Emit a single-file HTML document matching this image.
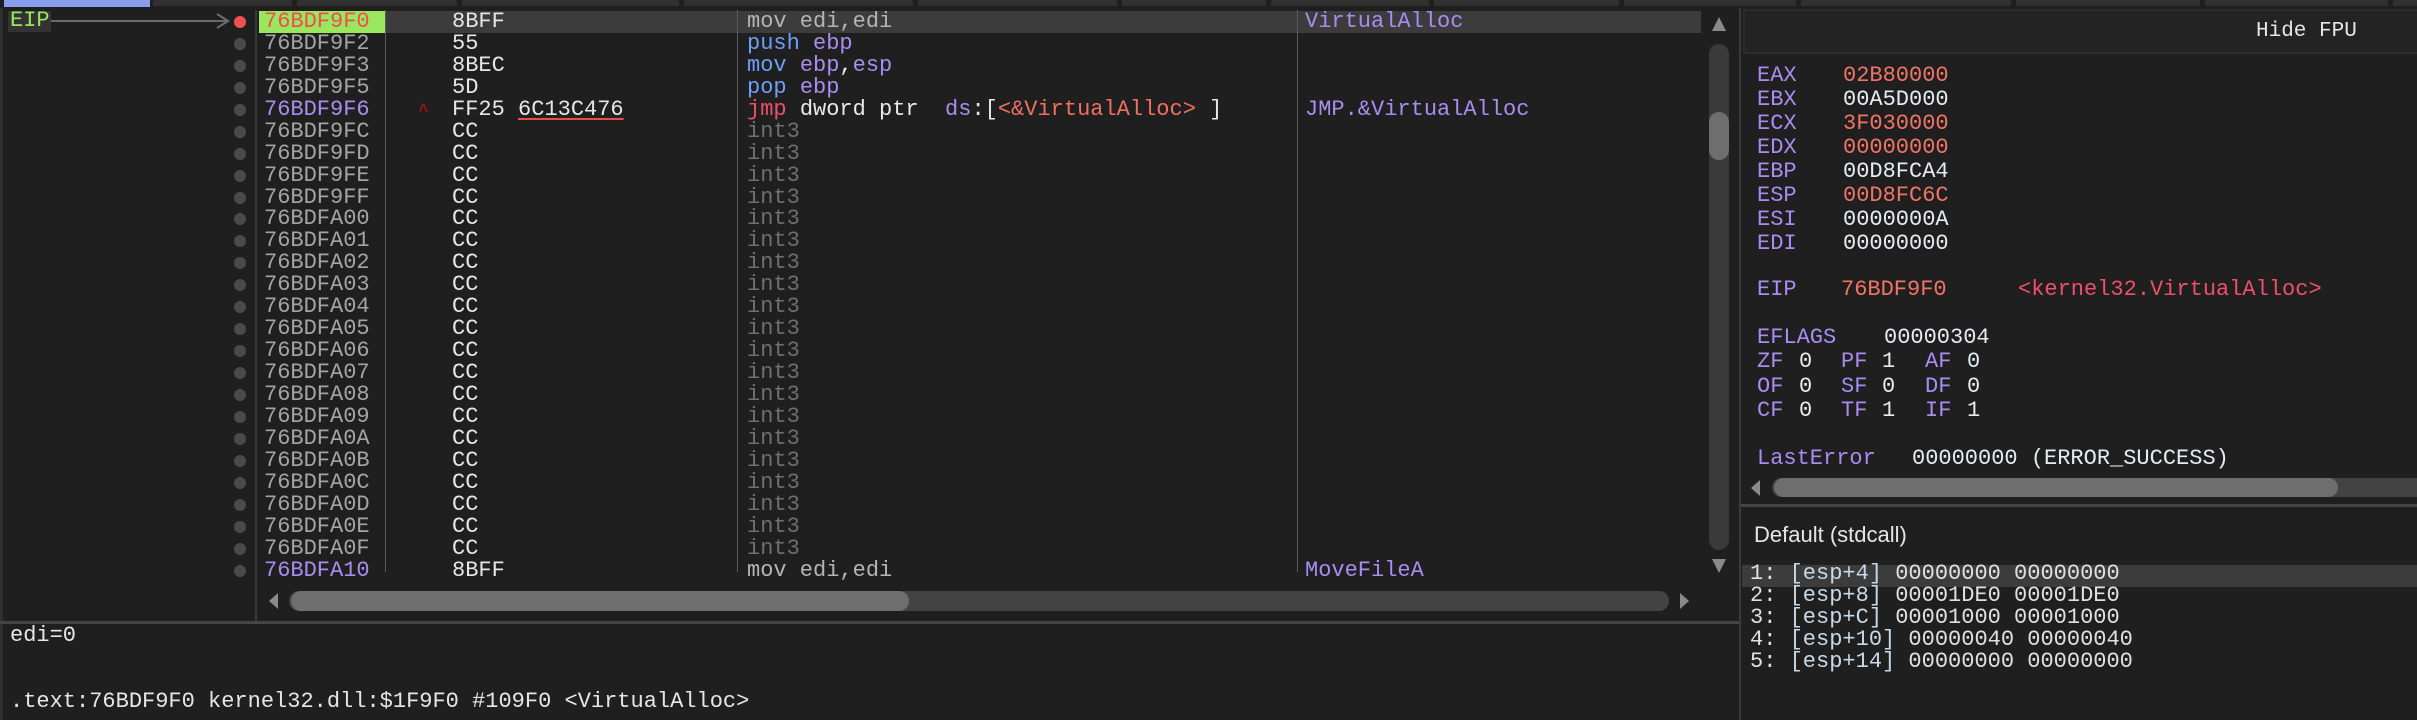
<!DOCTYPE html>
<html><head><meta charset="utf-8">
<style>
*{margin:0;padding:0;box-sizing:border-box}
body{width:2417px;height:720px;background:#1f1f1f;overflow:hidden;position:relative;font-family:"Liberation Mono","DejaVu Sans Mono",monospace;font-size:22px;color:#e0e0e0}
.a{position:absolute;white-space:pre;line-height:22px}
.tab{position:absolute;top:0;height:6px;background:#303030}
.row{position:absolute;left:0;width:1705px;height:22px}
.dot{position:absolute;left:234px;top:5px;width:12px;height:12px;border-radius:6px;background:#4a4a4a}
.ad{position:absolute;left:264px;top:0;color:#a4a4a4}
.by{position:absolute;left:452px;top:0;color:#e6e6e6}
.ds{position:absolute;left:747px;top:0}
.cm{position:absolute;left:1305px;top:0;color:#a98cf0}
.vl{position:absolute;width:2px;background:#555}
.r{color:#a98cf0}.v{color:#e4ecf2}.c{color:#f07466}
.g{color:#6f6f6f}.b{color:#6f9ef8}.p{color:#a98cf0}.rd{color:#f04e6a}.w{color:#e8e8e8}.s{color:#f07060}
.sb{color:#c8d8e8}
</style></head><body>
<div class="tab" style="left:4px;width:146px;background:#8a9ef0;height:7px"></div>
<div class="tab" style="left:153px;width:139px"></div>
<div class="tab" style="left:297px;width:160px"></div>
<div class="tab" style="left:462px;width:217px"></div>
<div class="tab" style="left:684px;width:229px"></div>
<div class="tab" style="left:918px;width:199px"></div>
<div class="tab" style="left:1122px;width:144px"></div>
<div class="tab" style="left:1271px;width:158px"></div>
<div class="tab" style="left:1434px;width:185px"></div>
<div class="tab" style="left:1624px;width:172px"></div>
<div class="tab" style="left:1801px;width:210px"></div>
<div class="tab" style="left:2016px;width:184px"></div>
<div class="tab" style="left:2205px;width:183px"></div>
<div class="tab" style="left:2393px;width:24px"></div>

<div style="position:absolute;left:0;top:8px;width:3px;height:712px;background:#303030"></div>
<div class="vl" style="left:255px;top:10px;height:611px;background:#3a3a3a"></div>
<div style="position:absolute;left:8px;top:11px;width:43px;height:21px;background:#333"></div>
<div class="a" style="left:10px;top:10px;color:#9ae65e">EIP</div>
<div style="position:absolute;left:51px;top:20px;width:178px;height:2px;background:#6a6a6a"></div>
<svg style="position:absolute;left:214px;top:12px" width="18" height="18"><path d="M3 2 L14 9 L3 16" stroke="#6a6a6a" stroke-width="2.2" fill="none"/></svg>

<div style="position:absolute;left:386px;top:11px;width:1315px;height:22px;background:#3c3c3c"></div>
<div style="position:absolute;left:259px;top:11px;width:126px;height:22px;background:#9ae65e"></div>
<div class="vl" style="left:385px;top:10px;height:562px;background:#5a5a5a;width:1px"></div>
<div class="vl" style="left:737px;top:10px;height:562px;background:#5a5a5a;width:1px"></div>
<div class="vl" style="left:1297px;top:10px;height:562px;background:#5a5a5a;width:1px"></div>

<div id="rows"></div>
<script>
var rows=[
["76BDF9F0","8BFF",'<span style="color:#b4b4b4">mov edi,edi</span>',"VirtualAlloc"],
["76BDF9F2","55",'<span class="b">push</span> <span class="p">ebp</span>',""],
["76BDF9F3","8BEC",'<span class="b">mov</span> <span class="p">ebp</span><span class="w">,</span><span class="p">esp</span>',""],
["76BDF9F5","5D",'<span class="b">pop</span> <span class="p">ebp</span>',""],
["76BDF9F6",'FF25 <span style="text-decoration:underline;text-decoration-color:#e84c4c;text-underline-offset:3px">6C13C476</span>','<span class="rd">jmp</span> <span class="w">dword ptr</span>  <span class="p">ds</span><span class="w">:[</span><span class="s">&lt;&amp;VirtualAlloc&gt;</span> <span class="w">]</span>',"JMP.&amp;VirtualAlloc"],
["76BDF9FC"],["76BDF9FD"],["76BDF9FE"],["76BDF9FF"]];
var h="0123456789ABCDEF";
for(var i=0;i<16;i++)rows.push(["76BDFA0"+h[i]]);
rows.push(["76BDFA10","8BFF",'<span style="color:#b4b4b4">mov edi,edi</span>',"MoveFileA"]);
var out="";
for(var i=0;i<rows.length;i++){
 var r=rows[i],t=11+i*21.94;
 var by=r[1]||"CC",ds=r[2]||'<span class="g">int3</span>',cm=r[3]||"";
 var ac=i==0?"#f04e4e":(i==4||i==25?"#a98cf0":"#a4a4a4");
 out+='<div class="row" style="top:'+t+'px"><div class="dot" style="'+(i==0?'background:#ee5050':'')+'"></div>'+
 '<div class="a ad" style="color:'+ac+'">'+r[0]+'</div><div class="a by">'+by+'</div><div class="a ds">'+ds+'</div><div class="a cm">'+cm+'</div>'+
 (i==4?'<div class="a" style="left:418px;top:2px;color:#c01010;font-size:18px">^</div>':'')+'</div>';
}
document.getElementById("rows").innerHTML=out;
</script>

<svg style="position:absolute;left:1708px;top:12px" width="22" height="22"><path d="M4 19 L11 5 L18 19Z" fill="#8a8a8a"/></svg>
<div style="position:absolute;left:1709px;top:44px;width:20px;height:506px;border-radius:10px;background:#3a3a3a"></div>
<div style="position:absolute;left:1709px;top:112px;width:20px;height:48px;border-radius:10px;background:#6e6e6e"></div>
<svg style="position:absolute;left:1708px;top:556px" width="22" height="22"><path d="M4 3 L11 17 L18 3Z" fill="#8a8a8a"/></svg>
<svg style="position:absolute;left:266px;top:591px" width="14" height="20"><path d="M12 2 L3 10 L12 18Z" fill="#8a8a8a"/></svg>
<div style="position:absolute;left:289px;top:591px;width:1380px;height:20px;border-radius:10px;background:#434343"></div>
<div style="position:absolute;left:291px;top:591px;width:618px;height:20px;border-radius:10px;background:#6e6e6e"></div>
<svg style="position:absolute;left:1678px;top:591px" width="14" height="20"><path d="M2 2 L11 10 L2 18Z" fill="#8a8a8a"/></svg>
<div style="position:absolute;left:0;top:621px;width:1740px;height:3px;background:#444"></div>
<div class="a" style="left:10px;top:625px;color:#e6e6e6">edi=0</div>
<div class="a" style="left:10px;top:691px;color:#e6e6e6">.text:76BDF9F0 kernel32.dll:$1F9F0 #109F0 &lt;VirtualAlloc&gt;</div>

<div style="position:absolute;left:1739px;top:8px;width:2px;height:712px;background:#3a3a3a"></div>
<div style="position:absolute;left:1743px;top:9px;width:674px;height:45px;background:#232323;border-top:2px solid #2c2c2c;border-bottom:2px solid #2c2c2c;border-left:2px solid #2c2c2c"></div>
<div class="a" style="left:2256px;top:21px;color:#e6e6e6;font-size:21px">Hide FPU</div>

<div class="a r" style="left:1757px;top:65px">EAX</div><div class="a c" style="left:1843px;top:65px">02B80000</div>
<div class="a r" style="left:1757px;top:89px">EBX</div><div class="a v" style="left:1843px;top:89px">00A5D000</div>
<div class="a r" style="left:1757px;top:113px">ECX</div><div class="a c" style="left:1843px;top:113px">3F030000</div>
<div class="a r" style="left:1757px;top:137px">EDX</div><div class="a c" style="left:1843px;top:137px">00000000</div>
<div class="a r" style="left:1757px;top:161px">EBP</div><div class="a v" style="left:1843px;top:161px">00D8FCA4</div>
<div class="a r" style="left:1757px;top:185px">ESP</div><div class="a c" style="left:1843px;top:185px">00D8FC6C</div>
<div class="a r" style="left:1757px;top:209px">ESI</div><div class="a v" style="left:1843px;top:209px">0000000A</div>
<div class="a r" style="left:1757px;top:233px">EDI</div><div class="a v" style="left:1843px;top:233px">00000000</div>
<div class="a r" style="left:1757px;top:279px">EIP</div><div class="a c" style="left:1841px;top:279px">76BDF9F0</div>
<div class="a" style="left:2018px;top:279px;color:#f04e6a">&lt;kernel32.VirtualAlloc&gt;</div>
<div class="a r" style="left:1757px;top:327px">EFLAGS</div><div class="a v" style="left:1884px;top:327px">00000304</div>
<div class="a r" style="left:1757px;top:351px">ZF</div><div class="a v" style="left:1799px;top:351px">0</div><div class="a r" style="left:1841px;top:351px">PF</div><div class="a v" style="left:1882px;top:351px">1</div><div class="a r" style="left:1925px;top:351px">AF</div><div class="a v" style="left:1967px;top:351px">0</div>
<div class="a r" style="left:1757px;top:376px">OF</div><div class="a v" style="left:1799px;top:376px">0</div><div class="a r" style="left:1841px;top:376px">SF</div><div class="a v" style="left:1882px;top:376px">0</div><div class="a r" style="left:1925px;top:376px">DF</div><div class="a v" style="left:1967px;top:376px">0</div>
<div class="a r" style="left:1757px;top:400px">CF</div><div class="a v" style="left:1799px;top:400px">0</div><div class="a r" style="left:1841px;top:400px">TF</div><div class="a v" style="left:1882px;top:400px">1</div><div class="a r" style="left:1925px;top:400px">IF</div><div class="a v" style="left:1967px;top:400px">1</div>
<div class="a r" style="left:1757px;top:448px">LastError</div><div class="a v" style="left:1912px;top:448px">00000000 (ERROR_SUCCESS)</div>

<svg style="position:absolute;left:1748px;top:478px" width="14" height="20"><path d="M12 2 L3 10 L12 18Z" fill="#8a8a8a"/></svg>
<div style="position:absolute;left:1772px;top:478px;width:645px;height:19px;background:#434343;border-radius:10px 0 0 10px"></div>
<div style="position:absolute;left:1774px;top:478px;width:564px;height:19px;border-radius:10px;background:#6e6e6e"></div>
<div style="position:absolute;left:1741px;top:504px;width:676px;height:3px;background:#444"></div>

<div class="a" style="left:1754px;top:524px;font-family:'Liberation Sans','DejaVu Sans',sans-serif;font-size:22px;color:#e6e6e6">Default (stdcall)</div>
<div style="position:absolute;left:1742px;top:565px;width:675px;height:22px;background:#3c3c3c"></div>
<div class="a" style="left:1750px;top:563px;font-size:22px;line-height:22px">1: <span class="sb">[esp+4]</span> 00000000 00000000
2: <span class="sb">[esp+8]</span> 00001DE0 00001DE0
3: <span class="sb">[esp+C]</span> 00001000 00001000
4: <span class="sb">[esp+10]</span> 00000040 00000040
5: <span class="sb">[esp+14]</span> 00000000 00000000</div>
</body></html>
